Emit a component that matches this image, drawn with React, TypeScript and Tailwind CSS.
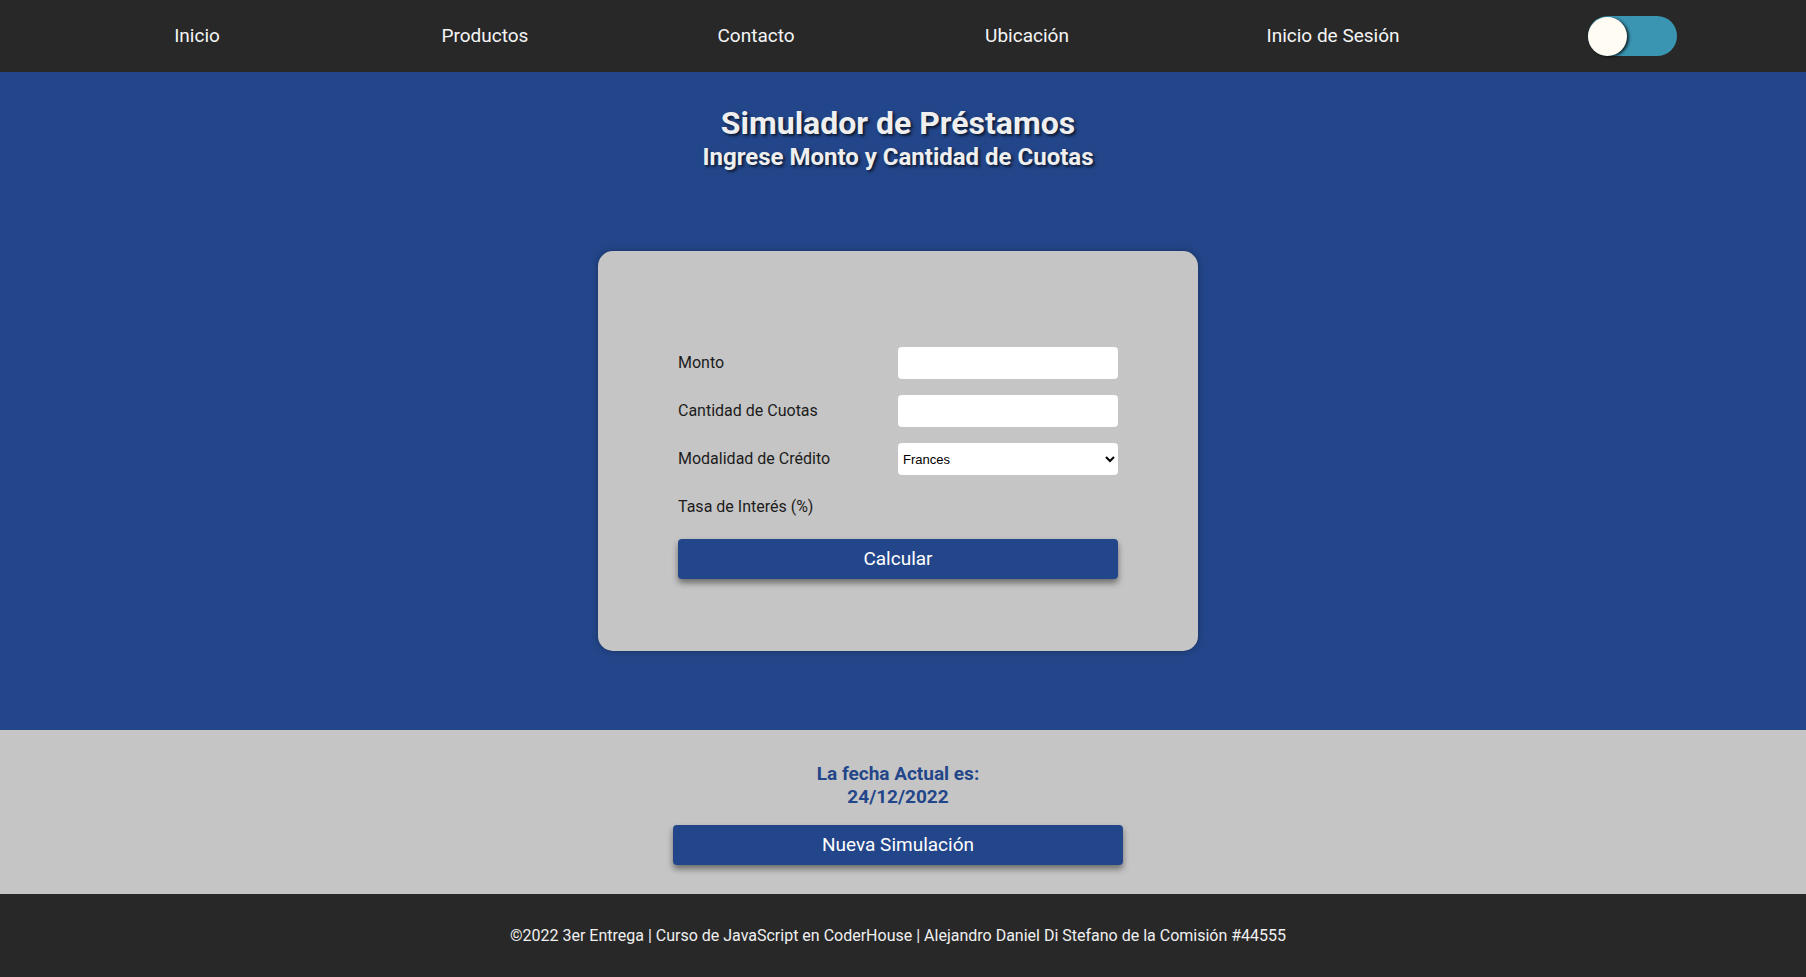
import { useState } from "react"

const navItems = ["Inicio", "Productos", "Contacto", "Ubicación", "Inicio de Sesión"]

function Toggle() {
    const [on, setOn] = useState(false)

    return (
        <button
            type="button"
            onClick={() => setOn(!on)}
            className="relative w-[89px] h-[40px] rounded-full bg-[#3a95b2] cursor-pointer"
        >
            <span
                className={
                    on
                        ? "absolute top-[0.5px] right-0 w-[39px] h-[39px] rounded-full bg-[#fffcf4] shadow-[-2px_1px_3px_rgba(0,0,0,0.75)]"
                        : "absolute top-[0.5px] left-0 w-[39px] h-[39px] rounded-full bg-[#fffcf4] shadow-[2px_1px_3px_rgba(0,0,0,0.75)]"
                }
            />
        </button>
    )
}

function Navbar() {
    return (
        <nav className="h-[72px] bg-[#282828] pl-[53px] grid grid-cols-[288px_288px_254px_288px_324px_274px] items-center">
            {navItems.map((item) => (
                <a key={item} href="#" className="text-center text-[19px] text-[#f5f5f5]">
                    {item}
                </a>
            ))}
            <div className="flex justify-center">
                <Toggle />
            </div>
        </nav>
    )
}

function Simulador() {
    const [monto, setMonto] = useState("")
    const [cuotas, setCuotas] = useState("")
    const [modalidad, setModalidad] = useState("frances")

    return (
        <section className="bg-[#23468a] pt-[33px] pb-[79px] pr-[10px] flex flex-col items-center">
            <h1 className="text-[32px] leading-[36px] font-bold text-[#efefef] [text-shadow:2px_2px_3px_rgba(0,0,0,0.65)]">
                Simulador de Préstamos
            </h1>
            <h2 className="mt-[2px] text-[24px] leading-[28px] font-bold text-[#efefef] [text-shadow:2px_2px_3px_rgba(0,0,0,0.65)]">
                Ingrese Monto y Cantidad de Cuotas
            </h2>

            <div className="mt-[80px] w-[600px] h-[400px] bg-[#c5c5c5] rounded-[15px] shadow-[0_0_6px_rgba(0,0,0,0.35)] pt-[96px] px-[80px] flex flex-col gap-4">
                <div className="h-8 flex items-center justify-between">
                    <label className="text-[16px] text-[#1c1c1c]">Monto</label>
                    <input
                        type="text"
                        value={monto}
                        onChange={(e) => setMonto(e.target.value)}
                        className="w-[220px] h-8 bg-white rounded-[4px] px-2 outline-none"
                    />
                </div>
                <div className="h-8 flex items-center justify-between">
                    <label className="text-[16px] text-[#1c1c1c]">Cantidad de Cuotas</label>
                    <input
                        type="text"
                        value={cuotas}
                        onChange={(e) => setCuotas(e.target.value)}
                        className="w-[220px] h-8 bg-white rounded-[4px] px-2 outline-none"
                    />
                </div>
                <div className="h-8 flex items-center justify-between">
                    <label className="text-[16px] text-[#1c1c1c]">Modalidad de Crédito</label>
                    <select
                        value={modalidad}
                        onChange={(e) => setModalidad(e.target.value)}
                        className="w-[220px] h-8 bg-white rounded-[4px] border-0 pl-[1px] text-[13px] text-black font-['Liberation_Sans',sans-serif] outline-none"
                    >
                        <option value="frances">Frances</option>
                        <option value="aleman">Aleman</option>
                        <option value="americano">Americano</option>
                    </select>
                </div>
                <div className="h-8 flex items-center">
                    <label className="text-[16px] text-[#1c1c1c]">Tasa de Interés (%)</label>
                </div>
                <button
                    type="button"
                    className="h-10 w-full bg-[#23468a] rounded-[4px] text-white text-[19px] shadow-[0_4px_6px_rgba(0,0,0,0.45)]"
                >
                    Calcular
                </button>
            </div>
        </section>
    )
}

function Fecha() {
    return (
        <section className="bg-[#c5c5c5] pt-[32px] pb-[29px] pr-[10px] flex flex-col items-center">
            <p className="text-[19px] leading-[23px] font-bold text-[#23468a] text-center">
                La fecha Actual es:
                <br />
                24/12/2022
            </p>
            <button
                type="button"
                className="mt-[17px] w-[450px] h-10 bg-[#23468a] rounded-[4px] text-white text-[19px] shadow-[0_4px_6px_rgba(0,0,0,0.45)]"
            >
                Nueva Simulación
            </button>
        </section>
    )
}

export default function App() {
    return (
        <div className="min-h-screen font-['Roboto',sans-serif]">
            <Navbar />
            <Simulador />
            <Fecha />
            <footer className="h-[83px] bg-[#282828] pr-[10px] flex items-center justify-center">
                <p className="text-[16px] text-[#f0f0f0]">
                    ©2022 3er Entrega | Curso de JavaScript en CoderHouse | Alejandro Daniel Di Stefano de la Comisión #44555
                </p>
            </footer>
        </div>
    )
}
